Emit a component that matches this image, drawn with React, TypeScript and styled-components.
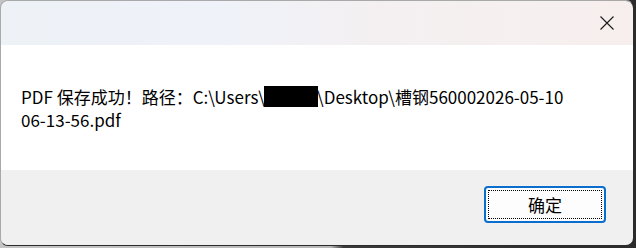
import React from "react";
import styled, { createGlobalStyle } from "styled-components";

const GlobalStyle = createGlobalStyle`
  html, body {
    margin: 0;
    padding: 0;
    width: 636px;
    height: 248px;
    overflow: hidden;
    background: #2b2b2b;
  }
  * { box-sizing: border-box; }
`;

const Frame = styled.div`
  width: 636px;
  height: 248px;
  background: linear-gradient(90deg, #c4c4c4 0%, #b8b8b8 52%, #3a3a3a 54%, #2b2b2b 100%);
  padding: 0 2px 2px 0;
`;

const Window = styled.div`
  width: 634px;
  height: 246px;
  display: flex;
  flex-direction: column;
  border: 1px solid #a9a9a9;
  border-right-color: #2b2b2b;
  border-bottom-color: #2b2b2b;
  border-radius: 8px;
  overflow: hidden;
  font-family: "Noto Sans CJK SC", "Noto Sans", sans-serif;
  color: #000;
`;

const TitleBar = styled.div`
  height: 44px;
  flex: none;
  display: flex;
  justify-content: flex-end;
  align-items: center;
  background: linear-gradient(90deg, #edf2f7 0%, #eff2f9 35%, #f4f0f1 60%, #f7efee 100%);
`;

const CloseButton = styled.div`
  width: 50px;
  height: 44px;
  display: flex;
  align-items: center;
  justify-content: center;
  margin-right: 1px;
`;

const Body = styled.div`
  flex: none;
  height: 125px;
  background: #ffffff;
  padding: 40px 0 0 20px;
  font-size: 17px;
  line-height: 23px;
`;

const Line = styled.div`
  white-space: nowrap;
  display: flex;
  align-items: center;
`;

const Redacted = styled.span`
  display: inline-block;
  width: 54px;
  height: 21px;
  background: #000;
  margin: 0 -1px;
`;

const Footer = styled.div`
  flex: 1;
  background: #f0f0f0;
  display: flex;
  justify-content: flex-end;
  align-items: flex-start;
  padding: 16px 27px 0 0;
`;

const OkButton = styled.button`
  width: 122px;
  height: 37px;
  padding: 2px;
  border: 2px solid #0a6ecf;
  border-radius: 4px;
  background: #fdfdfd;
  font-family: "Noto Sans CJK SC", sans-serif;
  font-size: 17px;
  color: #000;
  cursor: default;
`;

const FocusRect = styled.span`
  display: flex;
  width: 100%;
  height: 100%;
  align-items: center;
  justify-content: center;
  border: 1px dotted #000;
`;

export default function App() {
  return (
    <>
      <GlobalStyle />
      <Frame>
        <Window>
          <TitleBar>
            <CloseButton>
              <svg width="16" height="16" viewBox="0 0 16 16">
                <path d="M1.5 1.5 L14.5 14.5 M14.5 1.5 L1.5 14.5" stroke="#1a1a1a" strokeWidth="1.1" fill="none" />
              </svg>
            </CloseButton>
          </TitleBar>
          <Body>
            <Line>
              PDF 保存成功！路径：C:\Users\<Redacted />\Desktop\槽钢560002026-05-10
            </Line>
            <Line>06-13-56.pdf</Line>
          </Body>
          <Footer>
            <OkButton>
              <FocusRect>确定</FocusRect>
            </OkButton>
          </Footer>
        </Window>
      </Frame>
    </>
  );
}
